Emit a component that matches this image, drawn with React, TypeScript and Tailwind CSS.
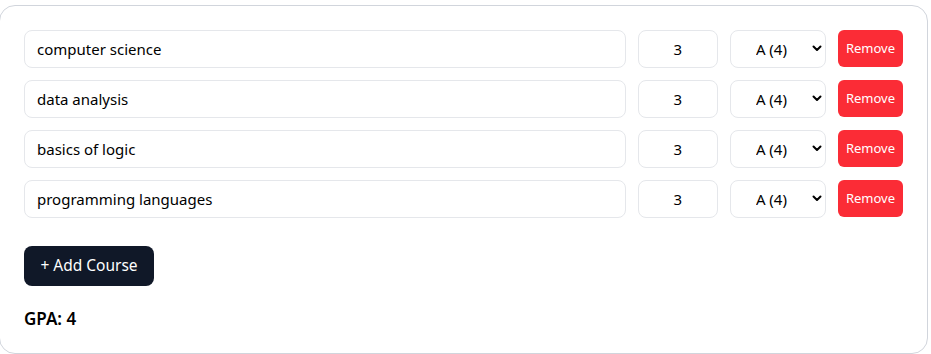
import { useState } from "react"

interface Course {
  id: number
  name: string
  credits: number
  grade: number
}

const grades = [
  { label: "A (4)", value: 4 },
  { label: "B (3)", value: 3 },
  { label: "C (2)", value: 2 },
  { label: "D (1)", value: 1 },
  { label: "F (0)", value: 0 },
]

export default function App() {
  const [courses, setCourses] = useState<Course[]>([
    { id: 1, name: "computer science", credits: 3, grade: 4 },
    { id: 2, name: "data analysis", credits: 3, grade: 4 },
    { id: 3, name: "basics of logic", credits: 3, grade: 4 },
    { id: 4, name: "programming languages", credits: 3, grade: 4 },
  ])

  const update = (id: number, patch: Partial<Course>) =>
    setCourses(courses.map((c) => (c.id === id ? { ...c, ...patch } : c)))

  const totalCredits = courses.reduce((s, c) => s + c.credits, 0)
  const gpa = totalCredits ? Math.round((courses.reduce((s, c) => s + c.credits * c.grade, 0) / totalCredits) * 100) / 100 : 0

  return (
    <div className="bg-white pt-[5px] w-[929px] -ml-px" style={{ fontFamily: '"Noto Sans", sans-serif' }}>
      <div className="border border-gray-300 rounded-2xl px-6 pt-6 pb-6 h-[349px]">
        <div className="flex flex-col gap-3">
          {courses.map((c) => (
            <div key={c.id} className="flex gap-3">
              <input
                value={c.name}
                onChange={(e) => update(c.id, { name: e.target.value })}
                className="flex-1 h-[38px] border border-gray-200 rounded-lg px-3 text-[15px] text-black outline-none"
              />
              <input
                value={c.credits}
                onChange={(e) => update(c.id, { credits: Number(e.target.value) || 0 })}
                className="w-20 h-[38px] border border-gray-200 rounded-lg text-center text-[15px] text-black outline-none"
              />
              <div className="relative w-24 h-[38px]">
                <select
                  value={c.grade}
                  onChange={(e) => update(c.id, { grade: Number(e.target.value) })}
                  className="appearance-none w-full h-full border border-gray-200 rounded-lg pl-[25px] text-[15px] text-black bg-white outline-none"
                >
                  {grades.map((g) => (
                    <option key={g.value} value={g.value}>
                      {g.label}
                    </option>
                  ))}
                </select>
                <svg className="absolute right-[4px] top-[15px] w-[10px] h-[8px] pointer-events-none" viewBox="0 0 10 8">
                  <path d="M1.5 1.5 L5 5 L8.5 1.5" fill="none" stroke="#000" strokeWidth="2" strokeLinecap="round" strokeLinejoin="round" />
                </svg>
              </div>
              <button
                onClick={() => setCourses(courses.filter((x) => x.id !== c.id))}
                className="h-[37px] px-2 bg-red-500 text-white text-[13px] rounded-md"
              >
                Remove
              </button>
            </div>
          ))}
        </div>
        <button
          onClick={() => setCourses([...courses, { id: Date.now(), name: "", credits: 3, grade: 4 }])}
          className="mt-7 h-10 w-[130px] bg-gray-900 text-white text-[15.5px] rounded-lg"
        >
          + Add Course
        </button>
        <div className="mt-5 text-[17px] font-semibold text-black">GPA: {gpa}</div>
      </div>
    </div>
  )
}
